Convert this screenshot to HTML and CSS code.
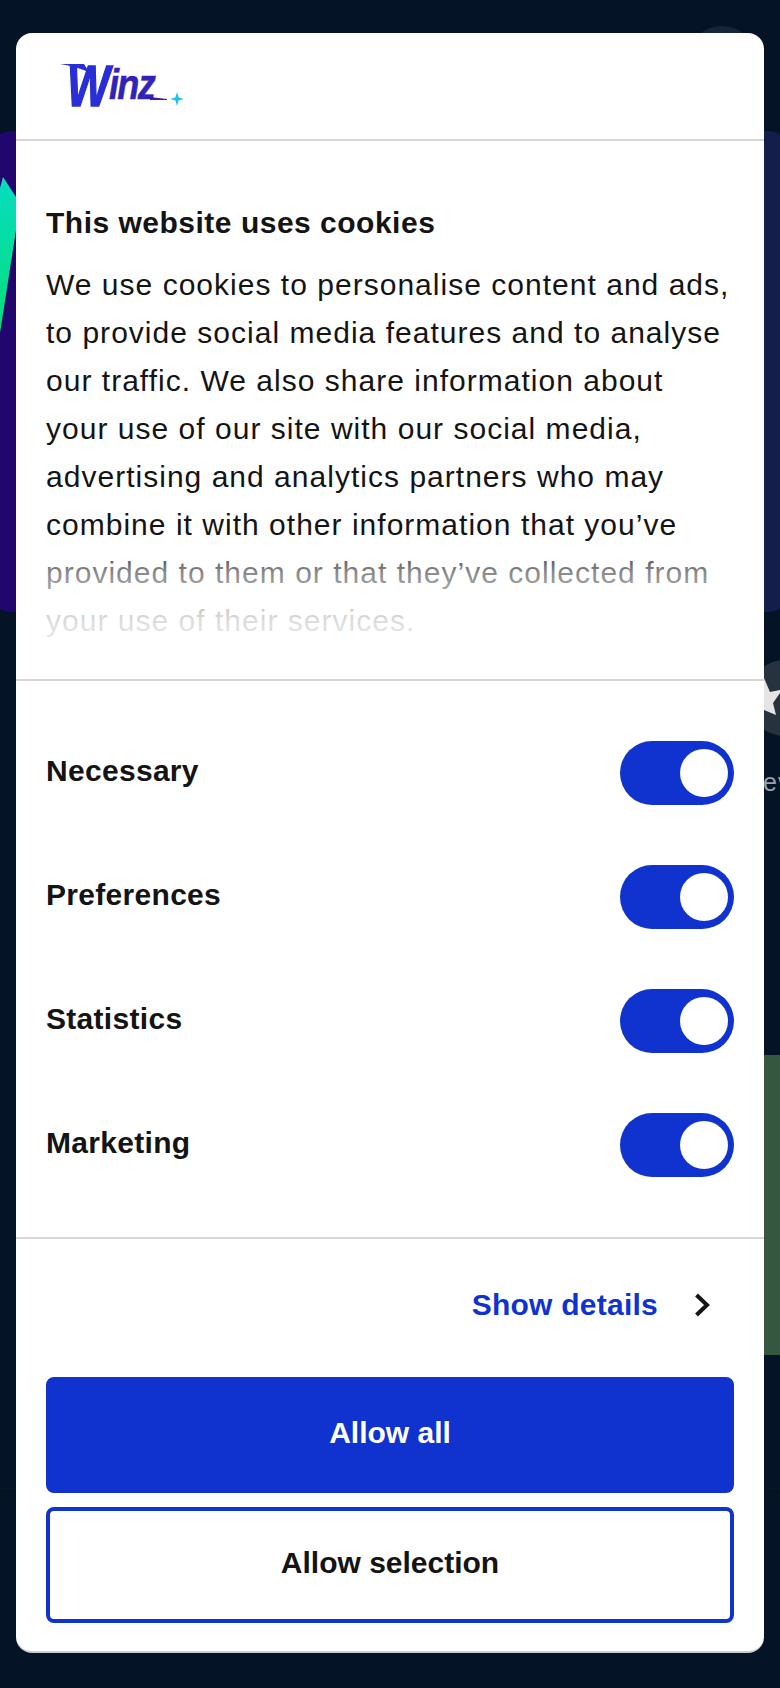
FILE: index.html
```html
<!DOCTYPE html>
<html lang="en">
    <head>
        <meta charset="UTF-8" />
        <title>Winz</title>
        <link rel="stylesheet" href="styles.css">
    </head>
    <body>
        <!-- page behind the dialog -->
        <div class="backdrop">
            <div class="bg-top-circle"></div>
            <div class="bg-banner-left">
                <svg class="bg-shard" width="16" height="190" viewBox="0 0 16 190">
                    <defs>
                        <linearGradient id="shardFill" x1="0" y1="0" x2="0" y2="1">
                            <stop offset="0" stop-color="#06dcc0" />
                            <stop offset="1" stop-color="#05e07a" />
                        </linearGradient>
                    </defs>
                    <path d="M0 27 L3 16 L16 36 L16 69 L0 172 Z" fill="url(#shardFill)" />
                </svg>
            </div>
            <div class="bg-banner-right"></div>
            <div class="bg-star-circle">
                <svg class="bg-star" width="16" height="40" viewBox="0 0 16 40">
                    <path d="M0 0 L6 14 L16 12 L16 15 L9 25 L12 37 L0 32 Z" fill="#e4e4e4" />
                </svg>
            </div>
            <div class="bg-label">ev</div>
            <div class="bg-green"></div>
            <div class="bg-footer"></div>
        </div>

        <div class="dialog">
            <div class="dialog-header">
                <div class="logo">
                    <span class="logo-w">W</span><span class="logo-inz">inz</span>
                    <svg class="logo-marks" width="130" height="52" viewBox="0 0 130 52">
                        <path d="M0 0 L24 0 L29 8 Q14 2 0 0 Z" fill="#2a2ed6" />
                        <path d="M90 33 L107 35 L107 36 L90 36 Z" fill="#3a1aa8" />
                        <path d="M117 28 L118.6 33.4 L124 35 L118.6 36.6 L117 42 L115.4 36.6 L110 35 L115.4 33.4 Z" fill="#1cc4ec" />
                    </svg>
                </div>
            </div>

            <div class="dialog-body">
                <h1 class="dialog-title">This website uses cookies</h1>
                <p class="dialog-text">We use cookies to personalise content and ads, to provide social media features and to analyse our traffic. We also share information about your use of our site with our social media, advertising and analytics partners who may combine it with other information that you’ve provided to them or that they’ve collected from your use of their services.</p>
                <div class="text-fade"></div>
            </div>

            <div class="toggle-list">
                <div class="toggle-row">
                    <span class="toggle-label">Necessary</span>
                    <span class="toggle"><span class="toggle-thumb"></span></span>
                </div>
                <div class="toggle-row">
                    <span class="toggle-label">Preferences</span>
                    <span class="toggle"><span class="toggle-thumb"></span></span>
                </div>
                <div class="toggle-row">
                    <span class="toggle-label">Statistics</span>
                    <span class="toggle"><span class="toggle-thumb"></span></span>
                </div>
                <div class="toggle-row">
                    <span class="toggle-label">Marketing</span>
                    <span class="toggle"><span class="toggle-thumb"></span></span>
                </div>
            </div>

            <div class="dialog-footer">
                <div class="details-link">
                    <span>Show details</span>
                    <svg class="chevron" width="16" height="24" viewBox="0 0 16 24">
                        <path d="M2.5 2 L13 12 L2.5 22" fill="none" stroke="#141414" stroke-width="4" />
                    </svg>
                </div>
                <button class="btn btn-primary">Allow all</button>
                <button class="btn btn-outline">Allow selection</button>
            </div>
        </div>
    </body>
</html>
```

FILE: styles.css
```css
html,
body {
    margin: 0;
    height: 1688px;
    overflow: hidden;
}
body {
    background-color: #051326;
    color: #141414;
    font-family: 'Liberation Sans', Arial, sans-serif;
    padding-top: 33px;
    box-sizing: border-box;
    position: relative;
}

/* page behind the dialog */
.backdrop {
    position: absolute;
    inset: 0;
    overflow: hidden;
}
.bg-top-circle {
    position: absolute;
    left: 686px;
    top: 26px;
    width: 72px;
    height: 72px;
    border-radius: 50%;
    background-color: #15263a;
}
.bg-banner-left {
    position: absolute;
    left: -12px;
    top: 131px;
    width: 200px;
    height: 481px;
    border-radius: 24px;
    background-color: #21066e;
}
.bg-shard {
    position: absolute;
    left: 12px;
    top: 30px;
}
.bg-banner-right {
    position: absolute;
    left: 600px;
    top: 131px;
    width: 192px;
    height: 481px;
    border-radius: 24px;
    background-color: #141e4b;
}
.bg-star-circle {
    position: absolute;
    left: 747px;
    top: 660px;
    width: 76px;
    height: 76px;
    border-radius: 50%;
    background-color: #27323f;
}
.bg-star {
    position: absolute;
    left: 17px;
    top: 18px;
}
.bg-label {
    position: absolute;
    left: 763px;
    top: 768px;
    font-size: 25px;
    letter-spacing: 1px;
    color: #98a0aa;
}
.bg-green {
    position: absolute;
    left: 700px;
    top: 1055px;
    width: 100px;
    height: 300px;
    border-radius: 16px;
    background-color: #35573f;
}
.bg-footer {
    position: absolute;
    left: 0;
    right: 0;
    top: 0;
    height: 1488px;
    border-bottom: 1px solid #0a1726;
}

/* dialog */
.dialog {
    position: relative;
    margin: 0 16px;
    height: 1620px;
    box-sizing: border-box;
    background-color: #fff;
    border-radius: 16px;
    border-bottom: 2px solid #c9ced2;
    overflow: hidden;
}
.dialog-header {
    height: 106px;
    border-bottom: 2px solid #d6d6d6;
}
.logo {
    position: relative;
    margin-left: 44px;
    padding-top: 31px;
    width: 130px;
    height: 75px;
    box-sizing: border-box;
    display: flex;
    align-items: baseline;
    white-space: nowrap;
}
.logo-w {
    display: inline-block;
    width: 42px;
    margin-left: 7px;
    font-weight: bold;
    font-style: italic;
    font-size: 58px;
    line-height: 44px;
    color: #2a2ed6;
    -webkit-text-stroke: 1.5px #2a2ed6;
    transform: scaleX(0.78);
    transform-origin: left center;
}
.logo-inz {
    display: inline-block;
    font-weight: bold;
    font-style: italic;
    font-size: 42px;
    line-height: 44px;
    letter-spacing: -2px;
    color: #3322b8;
    -webkit-text-stroke: 0.5px #3322b8;
    transform: translateY(-7px) scaleX(0.86);
    transform-origin: left center;
}
.logo-marks {
    position: absolute;
    left: 0;
    top: 31px;
}

.dialog-body {
    position: relative;
    height: 540px;
    padding: 58px 30px 0;
    box-sizing: border-box;
    border-bottom: 2px solid #d6d6d6;
    overflow: hidden;
}
.dialog-title {
    margin: 0 0 14px;
    font-size: 30px;
    line-height: 48px;
    letter-spacing: 0.5px;
    font-weight: bold;
}
.dialog-text {
    margin: 0;
    font-size: 30px;
    line-height: 48px;
    letter-spacing: 1.02px;
}
.text-fade {
    position: absolute;
    left: 0;
    right: 0;
    bottom: 0;
    height: 140px;
    background: linear-gradient(to bottom, rgba(255, 255, 255, 0) 0, rgba(255, 255, 255, 0.5) 24%, rgba(255, 255, 255, 0.85) 58%, #fff 100%);
}

.toggle-list {
    padding: 60px 30px 0;
    height: 558px;
    box-sizing: border-box;
    border-bottom: 2px solid #d6d6d6;
    display: flex;
    flex-direction: column;
    gap: 60px;
}
.toggle-row {
    display: flex;
    justify-content: space-between;
    align-items: center;
    height: 64px;
}
.toggle-label {
    padding-bottom: 5px;
    font-size: 30px;
    font-weight: bold;
    letter-spacing: 0.3px;
}
.toggle {
    display: flex;
    justify-content: flex-end;
    align-items: center;
    width: 114px;
    height: 64px;
    padding: 0 6px;
    box-sizing: border-box;
    border-radius: 32px;
    background-color: #1032cf;
}
.toggle-thumb {
    width: 48px;
    height: 48px;
    border-radius: 50%;
    background-color: #fff;
}

.dialog-footer {
    padding: 0 30px;
    display: flex;
    flex-direction: column;
}
.details-link {
    display: flex;
    justify-content: flex-end;
    align-items: center;
    height: 138px;
    padding: 0 24px 6px 0;
    box-sizing: border-box;
    gap: 36px;
    font-size: 30px;
    letter-spacing: 0.25px;
    font-weight: bold;
    color: #1032cf;
}
.btn {
    height: 116px;
    padding: 0 0 4px;
    border-radius: 8px;
    font-family: 'Liberation Sans', Arial, sans-serif;
    font-size: 30px;
    font-weight: bold;
    cursor: pointer;
}
.btn-primary {
    background-color: #1032cf;
    border: 4px solid #1032cf;
    color: #fff;
    margin-bottom: 14px;
}
.btn-outline {
    background-color: #fff;
    border: 4px solid #1032cf;
    color: #141414;
}
```
